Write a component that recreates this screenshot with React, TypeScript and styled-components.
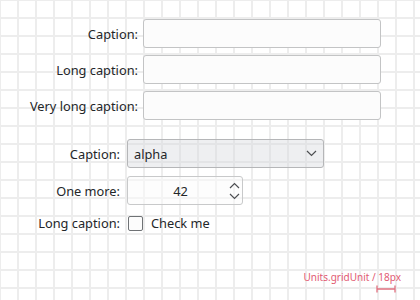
import React, { FC } from "react";
import styled, { createGlobalStyle } from "styled-components";

const GlobalStyle = createGlobalStyle`
  html, body {
    margin: 0;
    padding: 0;
  }
  body {
    font-family: "Noto Sans", "DejaVu Sans", sans-serif;
    color: #232629;
  }
`;

const Page = styled.div`
  width: 420px;
  height: 300px;
  box-sizing: border-box;
  padding-top: 19px;
  display: flex;
  flex-direction: column;
  background-color: #ffffff;
  background-image: linear-gradient(to right, #ededed 2px, transparent 2px),
    linear-gradient(to bottom, #ededed 2px, transparent 2px);
  background-size: 18px 18px;
  background-position: 17px 17px;
  overflow: hidden;
`;

const Form = styled.div<{ $labelWidth: number; $gap: number }>`
  display: grid;
  grid-template-columns: ${(p) => p.$labelWidth}px auto;
  column-gap: ${(p) => p.$gap}px;
  row-gap: 7px;
  align-items: center;
  justify-content: start;
`;

const SecondForm = styled(Form)`
  margin-top: 19px;
  row-gap: 8px;
`;

const Label = styled.div`
  font-size: 12.8px;
  text-align: right;
  white-space: nowrap;
`;

const TextField = styled.div`
  width: 238px;
  height: 29px;
  box-sizing: border-box;
  border: 1px solid #c3c4c5;
  border-radius: 3px;
  background: #fcfcfc;
`;

const Combo = styled.div`
  width: 197px;
  height: 29px;
  box-sizing: border-box;
  border: 1px solid #b5b6b8;
  border-radius: 3px;
  background: rgba(214, 218, 222, 0.42);
  display: flex;
  align-items: center;
  justify-content: space-between;
  padding: 0 6px 0 6px;
  font-size: 12.8px;
`;

const Spin = styled.div`
  width: 116px;
  height: 29px;
  box-sizing: border-box;
  border: 1px solid #c8c9ca;
  border-radius: 3px;
  background: rgba(252, 252, 252, 0.5);
  display: flex;
  align-items: center;
  padding-right: 2px;
  font-size: 12.8px;
`;

const SpinValue = styled.span`
  flex: 1;
  text-align: center;
  padding-left: 4px;
`;

const CheckRow = styled.label`
  display: flex;
  align-items: center;
  gap: 8px;
  height: 20px;
  font-size: 12.8px;
`;

const Box = styled.span`
  width: 15px;
  height: 15px;
  box-sizing: border-box;
  border: 1px solid #6f7275;
  border-radius: 2px;
  background: #fcfcfc;
  margin-left: 1px;
`;

const Legend = styled.div`
  margin-top: auto;
  align-self: flex-end;
  padding: 0 19px 7px 0;
  display: flex;
  flex-direction: column;
  align-items: flex-end;
  gap: 1px;
`;

const LegendText = styled.span`
  font-size: 10px;
  color: #e25a72;
`;

const Ruler = styled.svg`
  margin-right: 5px;
  display: block;
`;

const Chevron: FC<{ up?: boolean }> = ({ up }) => (
  <svg width="11" height="7" viewBox="0 0 11 7">
    <path
      d={up ? "M1 6 L5.5 1.5 L10 6" : "M1 1 L5.5 5.5 L10 1"}
      fill="none"
      stroke="#4d4f52"
      strokeWidth="1.2"
    />
  </svg>
);

const Arrows = styled.div`
  display: flex;
  flex-direction: column;
  gap: 4px;
`;

const App: FC = () => {
  return (
    <Page>
      <GlobalStyle />
      <Form $labelWidth={138} $gap={5}>
        <Label>Caption:</Label>
        <TextField />
        <Label>Long caption:</Label>
        <TextField />
        <Label>Very long caption:</Label>
        <TextField />
      </Form>
      <SecondForm $labelWidth={120} $gap={7}>
        <Label>Caption:</Label>
        <Combo>
          <span>alpha</span>
          <Chevron />
        </Combo>
        <Label>One more:</Label>
        <Spin>
          <SpinValue>42</SpinValue>
          <Arrows>
            <Chevron up />
            <Chevron />
          </Arrows>
        </Spin>
        <Label>Long caption:</Label>
        <CheckRow>
          <Box />
          Check me
        </CheckRow>
      </SecondForm>
      <Legend>
        <LegendText>Units.gridUnit / 18px</LegendText>
        <Ruler width="20" height="8" viewBox="0 0 20 8">
          <path d="M1 4 H19 M1 0.5 V7.5 M19 0.5 V7.5" stroke="#e0707f" strokeWidth="1.3" fill="none" />
        </Ruler>
      </Legend>
    </Page>
  );
};

export default App;
